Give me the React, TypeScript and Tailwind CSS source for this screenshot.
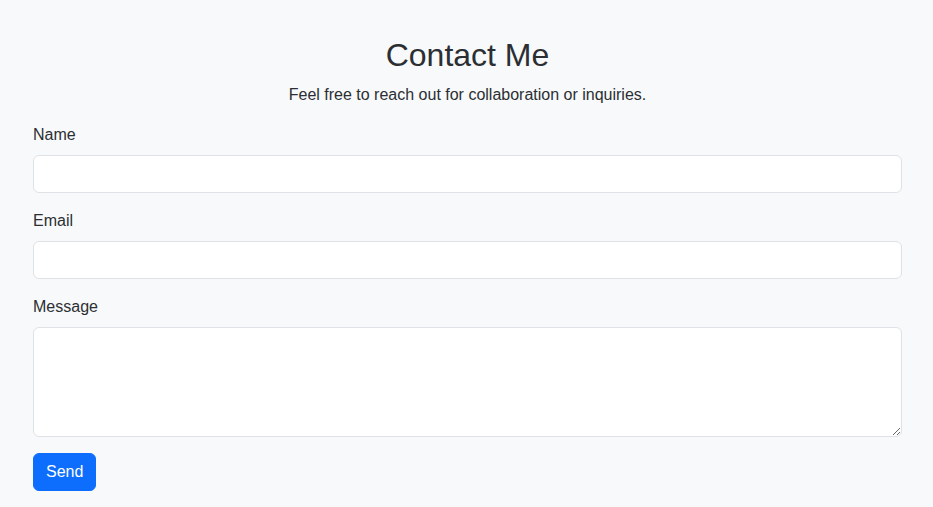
export default function App() {
  return (
    <div className="min-h-screen bg-[#f8f9fa] text-[#2b2f33] font-['Liberation_Sans',Arial,sans-serif] text-base leading-6">
      <div className="pl-[33px] pr-[31px] pt-[36px] pb-4">
        <h2 className="text-[32px] leading-[1.2] font-normal text-center mb-[9px]">Contact Me</h2>
        <p className="text-center mb-4">Feel free to reach out for collaboration or inquiries.</p>
        <form onSubmit={(e) => e.preventDefault()}>
          <div className="mb-4">
            <label htmlFor="name" className="block mb-2">Name</label>
            <input
              id="name"
              type="text"
              className="block w-full h-[38px] px-3 py-1.5 bg-white border border-[#dee2e6] rounded-[6px] outline-none"
            />
          </div>
          <div className="mb-4">
            <label htmlFor="email" className="block mb-2">Email</label>
            <input
              id="email"
              type="email"
              className="block w-full h-[38px] px-3 py-1.5 bg-white border border-[#dee2e6] rounded-[6px] outline-none"
            />
          </div>
          <div className="mb-4">
            <label htmlFor="message" className="block mb-2">Message</label>
            <textarea
              id="message"
              rows={4}
              className="block w-full h-[110px] px-3 py-1.5 bg-white border border-[#dee2e6] rounded-[6px] outline-none resize-y"
            />
          </div>
          <button
            type="submit"
            className="h-[38px] px-3 bg-[#0d6efd] text-white rounded-[6px] border border-[#0d6efd]"
          >
            Send
          </button>
        </form>
      </div>
    </div>
  );
}
